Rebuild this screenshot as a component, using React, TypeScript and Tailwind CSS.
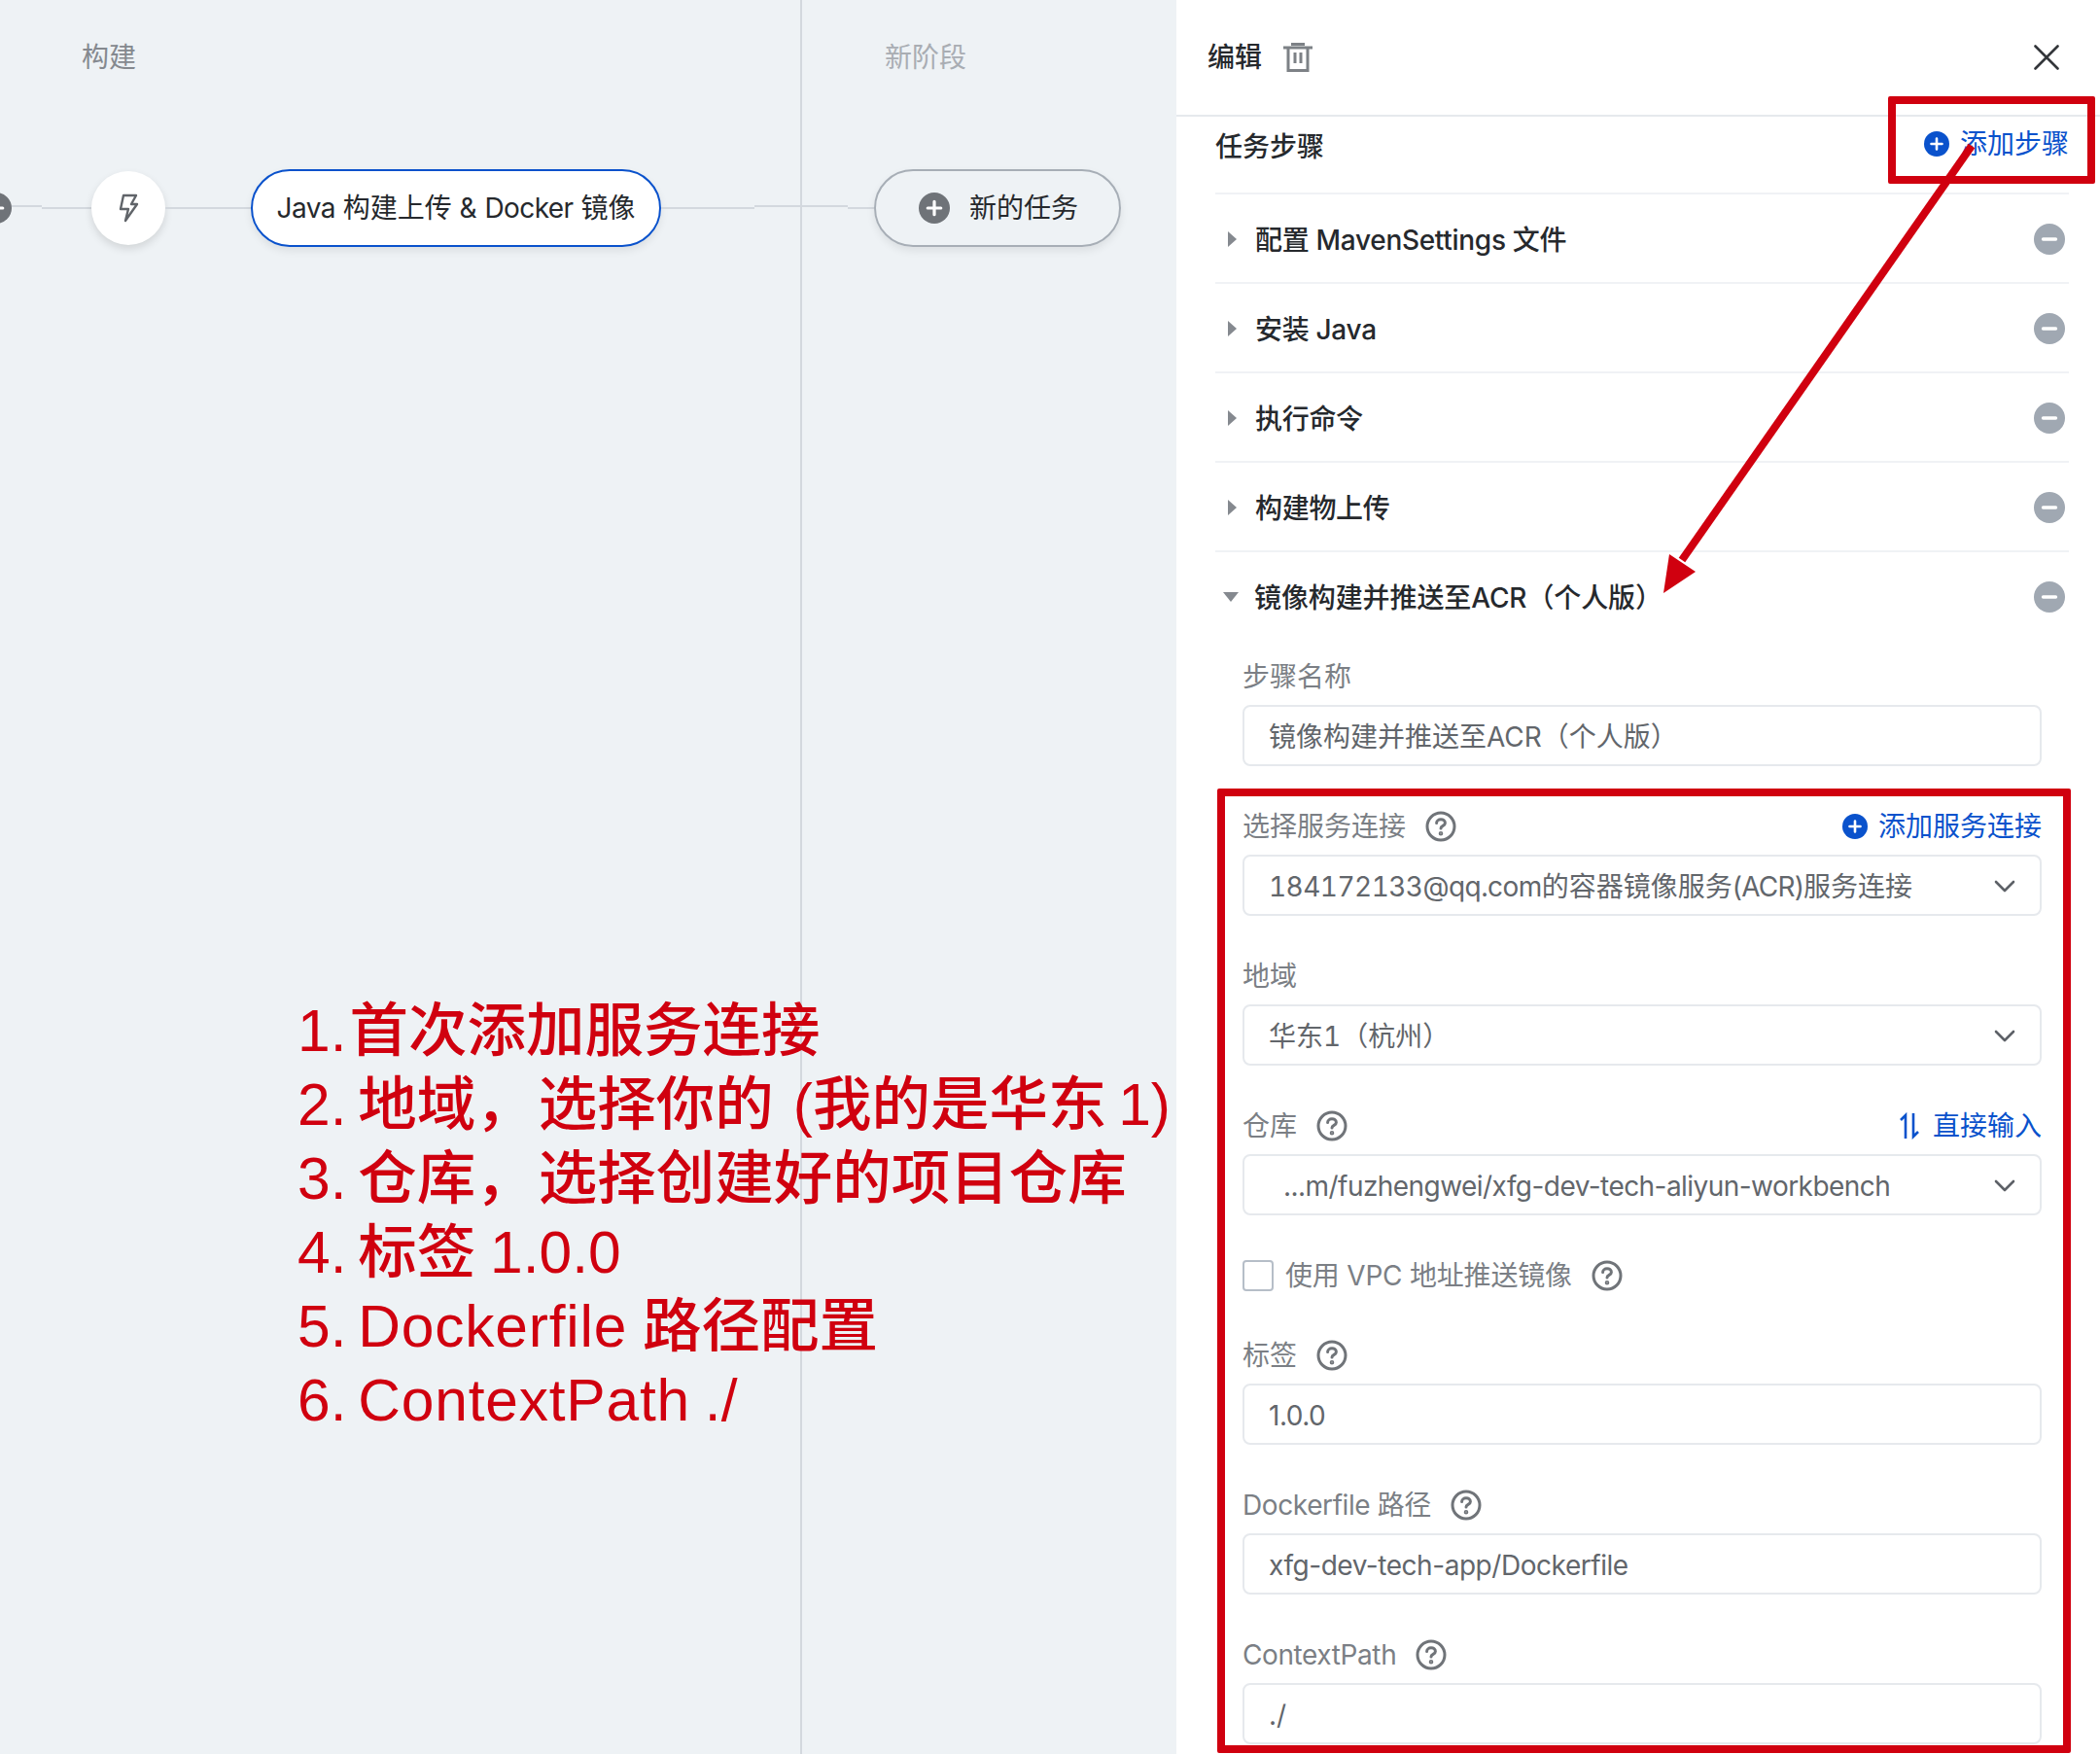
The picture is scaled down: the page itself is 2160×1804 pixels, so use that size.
import type { ReactNode } from 'react';

const steps = ['配置 MavenSettings 文件', '安装 Java', '执行命令', '构建物上传'];

function Help() {
  return (
    <svg width="32" height="32" viewBox="0 0 32 32" fill="none" stroke="#707479" strokeWidth="3" strokeLinecap="round" className="shrink-0">
      <circle cx="16" cy="16" r="14" />
      <path d="M11.6 12.6c0-2.4 2-3.8 4.4-3.8s4.4 1.4 4.4 3.6c0 3.2-4.4 2.8-4.4 5.6" />
      <circle cx="16" cy="23.2" r="0.8" fill="#707479" />
    </svg>
  );
}

function PlusDot({ color, size = 26 }: { color: string; size?: number }) {
  return (
    <svg width={size} height={size} viewBox="0 0 26 26" className="shrink-0">
      <circle cx="13" cy="13" r="13" fill={color} />
      <path d="M13 7.5v11M7.5 13h11" stroke="#fff" strokeWidth="2.6" strokeLinecap="round" />
    </svg>
  );
}

function MinusDot() {
  return (
    <svg width="32" height="32" viewBox="0 0 32 32" className="shrink-0">
      <circle cx="16" cy="16" r="16" fill="#a0a8b2" />
      <path d="M9.5 16h13" stroke="#fff" strokeWidth="3.4" strokeLinecap="round" />
    </svg>
  );
}

function Chevron() {
  return (
    <svg width="24" height="24" viewBox="0 0 24 24" fill="none" stroke="#5d6167" strokeWidth="2.6" strokeLinecap="round" strokeLinejoin="round" className="shrink-0">
      <path d="M3 8l9 9 9-9" />
    </svg>
  );
}

function Field({ label, help, extra, tight, children }: { label: string; help?: boolean; extra?: ReactNode; tight?: boolean; children: ReactNode }) {
  return (
    <div>
      <div className="flex items-center justify-between h-10">
        <div className="flex items-center gap-5 text-[#7b7f85]">
          <span className={tight ? 'tracking-[-0.4px]' : ''}>{label}</span>
          {help && <Help />}
        </div>
        {extra}
      </div>
      <div className="mt-[9px]">{children}</div>
    </div>
  );
}

function Box({ children, select, className = 'pl-[25px]' }: { children: ReactNode; select?: boolean; className?: string }) {
  return (
    <div className={`h-[63px] rounded-lg border-2 border-[#e6e9ed] flex items-center justify-between pr-[24px] text-[#62666b] ${className}`}>
      <span className="mt-[2px]">{children}</span>
      {select && <Chevron />}
    </div>
  );
}

export default function App() {
  return (
    <div className="relative w-[2160px] h-[1804px] overflow-hidden flex bg-white text-[28px] leading-10 [font-family:Inter,'Noto_Sans_CJK_SC',sans-serif]">
      {/* canvas */}
      <div className="relative w-[1210px] shrink-0 bg-[#eef2f5] flex">
        <div className="w-[825px] shrink-0 border-r-2 border-[#d3d8de]">
          <div className="pl-[84px] pt-[39px] h-[174px] text-[#85898f]">构建</div>
          <div className="flex items-center h-[80px]">
            <div className="-ml-[20px] shrink-0 flex">
              <PlusDot color="#6f7378" size={32} />
            </div>
            <div className="w-[31px] h-[2px] bg-[#d3d8de] -translate-y-[2px]" />
            <div className="w-[51px] h-[2px] bg-[#d3d8de]" />
            <div className="w-[76px] h-[76px] shrink-0 rounded-full bg-white shadow-[0_4px_8px_rgba(0,0,0,0.12)] flex items-center justify-center">
              <svg width="22" height="30" viewBox="0 0 22 30" fill="none" stroke="#606469" strokeWidth="2.4" strokeLinejoin="round">
                <path d="M6 2h13l-5 9h6L8 28l3-12H3z" />
              </svg>
            </div>
            <div className="w-[88px] h-[2px] bg-[#d3d8de]" />
            <div className="w-[422px] h-[80px] shrink-0 rounded-[40px] border-2 border-[#0a52cc] bg-white shadow-[0_4px_8px_rgba(0,0,0,0.08)] flex items-center justify-center text-[#26292d]">
              <span>
                <span className="tracking-[-0.6px]">Java</span> 构建上传 & <span className="tracking-[-0.6px]">Docker</span> 镜像
              </span>
            </div>
            <div className="w-[96px] h-[2px] bg-[#d3d8de]" />
            <div className="flex-1 h-[2px] bg-[#d3d8de] -translate-y-[2px]" />
          </div>
        </div>
        <div className="flex-1">
          <div className="pl-[85px] pt-[39px] h-[174px] text-[#a9adb3]">新阶段</div>
          <div className="flex items-center h-[80px]">
            <div className="w-[47px] h-[2px] bg-[#d3d8de] -translate-y-[2px]" />
            <div className="w-[27px] h-[2px] bg-[#d3d8de]" />
            <div className="w-[254px] h-[80px] shrink-0 rounded-[40px] border-2 border-[#a7aeb6] shadow-[0_4px_8px_rgba(0,0,0,0.08)] flex items-center justify-center gap-[20px] pl-[2px] text-[#26292d]">
              <PlusDot color="#6f7378" size={32} />
              新的任务
            </div>
          </div>
        </div>
        {/* red annotation */}
        <div className="absolute left-[306px] top-[1022px] text-[60.5px] font-medium leading-[76px] whitespace-nowrap text-[#d0000f] [word-spacing:-5px] [font-family:'Liberation_Sans','Noto_Sans_CJK_SC',sans-serif]">
          <div>1.<span className="ml-[3px]">首次添加服务连接</span></div>
          <div>2. 地域，<span className="ml-[4px]">选择你的</span><span className="ml-[20px]">(我的是华东 1)</span></div>
          <div>3. 仓库，<span className="ml-[4px]">选择创建好的项目仓库</span></div>
          <div>4. 标签<span className="ml-[3px]"> 1.0.0</span></div>
          <div>5. <span className="tracking-[0.8px]">Dockerfile</span><span className="ml-[4px]"> 路径配置</span></div>
          <div>6. <span className="tracking-[0.8px]">ContextPath</span><span className="ml-[3px]"> ./</span></div>
        </div>
      </div>

      {/* edit panel */}
      <div className="flex-1 min-w-0">
        <div className="h-[120px] border-b-2 border-[#e6e9ed] flex items-center justify-between pl-[32px] pr-[42px]">
          <div className="flex items-center gap-[22px] font-medium text-[#26292d]">
            <span>编辑</span>
            <svg width="30" height="30" viewBox="0 0 30 30" fill="none" stroke="#7d8186" strokeWidth="3">
              <path d="M0 5h30M5 5v23.5h20V5M8 1.5h14M12 10v11M18 10v11" />
            </svg>
          </div>
          <svg width="26" height="26" viewBox="0 0 26 26" fill="none" stroke="#33363a" strokeWidth="2.6" strokeLinecap="round">
            <path d="M1.5 1.5l23 23M24.5 1.5l-23 23" />
          </svg>
        </div>
        <div className="ml-[40px] mr-[32px]">
          <div className="h-[80px] flex items-center justify-between border-b-2 border-[#f0f2f5] font-medium text-[#26292d]">
            <span className="mb-[16px]">任务步骤</span>
            <span className="flex items-center gap-[11px] text-[#0a52cc] font-normal mb-[22px]">
              <PlusDot color="#0a52cc" />
              添加步骤
            </span>
          </div>
          {steps.map((s) => (
            <div key={s} className="h-[92px] pt-[2px] flex items-center border-b-2 border-[#f0f2f5] text-[#26292d] font-medium tracking-[-0.3px]">
              <svg width="10" height="16" viewBox="0 0 10 16" className="ml-[12px] mr-[19px] shrink-0">
                <path d="M1 0l9 8-9 8z" fill="#85898f" />
              </svg>
              <span className="flex-1 pt-[2px]">{s}</span>
              <span className="mr-[4px]">
                <MinusDot />
              </span>
            </div>
          ))}
          <div className="h-[92px] flex items-center text-[#26292d] font-medium tracking-[-0.1px]">
            <svg width="16" height="10" viewBox="0 0 16 10" className="ml-[8px] mr-[16px] shrink-0">
              <path d="M0 0h16L8 10z" fill="#85898f" />
            </svg>
            <span className="flex-1 pt-[2px]">镜像构建并推送至ACR（个人版）</span>
            <span className="mr-[4px]">
              <MinusDot />
            </span>
          </div>
          <div className="ml-[28px] mr-[28px] mt-[16px] flex flex-col gap-[42px]">
            <Field label="步骤名称">
              <Box>镜像构建并推送至ACR（个人版）</Box>
            </Field>
            <Field
              label="选择服务连接"
              help
              extra={
                <span className="flex items-center gap-[11px] text-[#0a52cc]">
                  <PlusDot color="#0a52cc" />
                  添加服务连接
                </span>
              }
            >
              <Box select className="pl-[25px]">
                <span className="tabular-nums tracking-[-0.55px]">184172133@qq.com</span>的容器镜像服务<span className="tracking-[-0.8px]">(ACR)</span>服务连接
              </Box>
            </Field>
            <Field label="地域">
              <Box select className="pl-[25px] tabular-nums">华东1（杭州）</Box>
            </Field>
            <Field
              label="仓库"
              help
              extra={
                <span className="flex items-center gap-[14px] text-[#0a52cc]">
                  <svg width="20" height="28" viewBox="0 0 20 28" fill="none" stroke="#0a52cc" strokeWidth="2.6">
                    <path d="M6 27V3L1 8M14 1v24l5-5" />
                  </svg>
                  直接输入
                </span>
              }
            >
              <Box select className="pl-[40px] tracking-[-0.55px]">...m/fuzhengwei/xfg-dev-tech-aliyun-workbench</Box>
            </Field>
            <div className="flex items-center h-10 text-[#7b7f85]">
              <div className="w-[32px] h-[32px] rounded-[4px] border-2 border-[#b6bec8] bg-white mr-[12px]" />
              <span className="mr-[20px] tracking-[-0.2px]">使用 VPC 地址推送镜像</span>
              <Help />
            </div>
            <Field label="标签" help>
              <Box className="pl-[25px] tracking-[-0.5px]">1.0.0</Box>
            </Field>
            <Field label="Dockerfile 路径" help tight>
              <Box className="pl-[25px] tracking-[-0.45px]">xfg-dev-tech-app/Dockerfile</Box>
            </Field>
            <Field label="ContextPath" help tight>
              <Box>./</Box>
            </Field>
          </div>
        </div>
      </div>

      {/* callouts drawn over the panel */}
      <div className="absolute left-[1942px] top-[99px] w-[213px] h-[90px] border-[8px] border-[#d0000f] rounded-[2px]" />
      <div className="absolute left-[1252px] top-[811px] w-[878px] h-[992px] border-[8px] border-[#d0000f] rounded-[2px]" />
      <svg width="2160" height="1804" className="absolute left-0 top-0 pointer-events-none">
        <path d="M2028 150L1730 576" stroke="#d0000f" strokeWidth="8" />
        <path d="M1711 610L1717 570L1744 588Z" fill="#d0000f" />
      </svg>
    </div>
  );
}
